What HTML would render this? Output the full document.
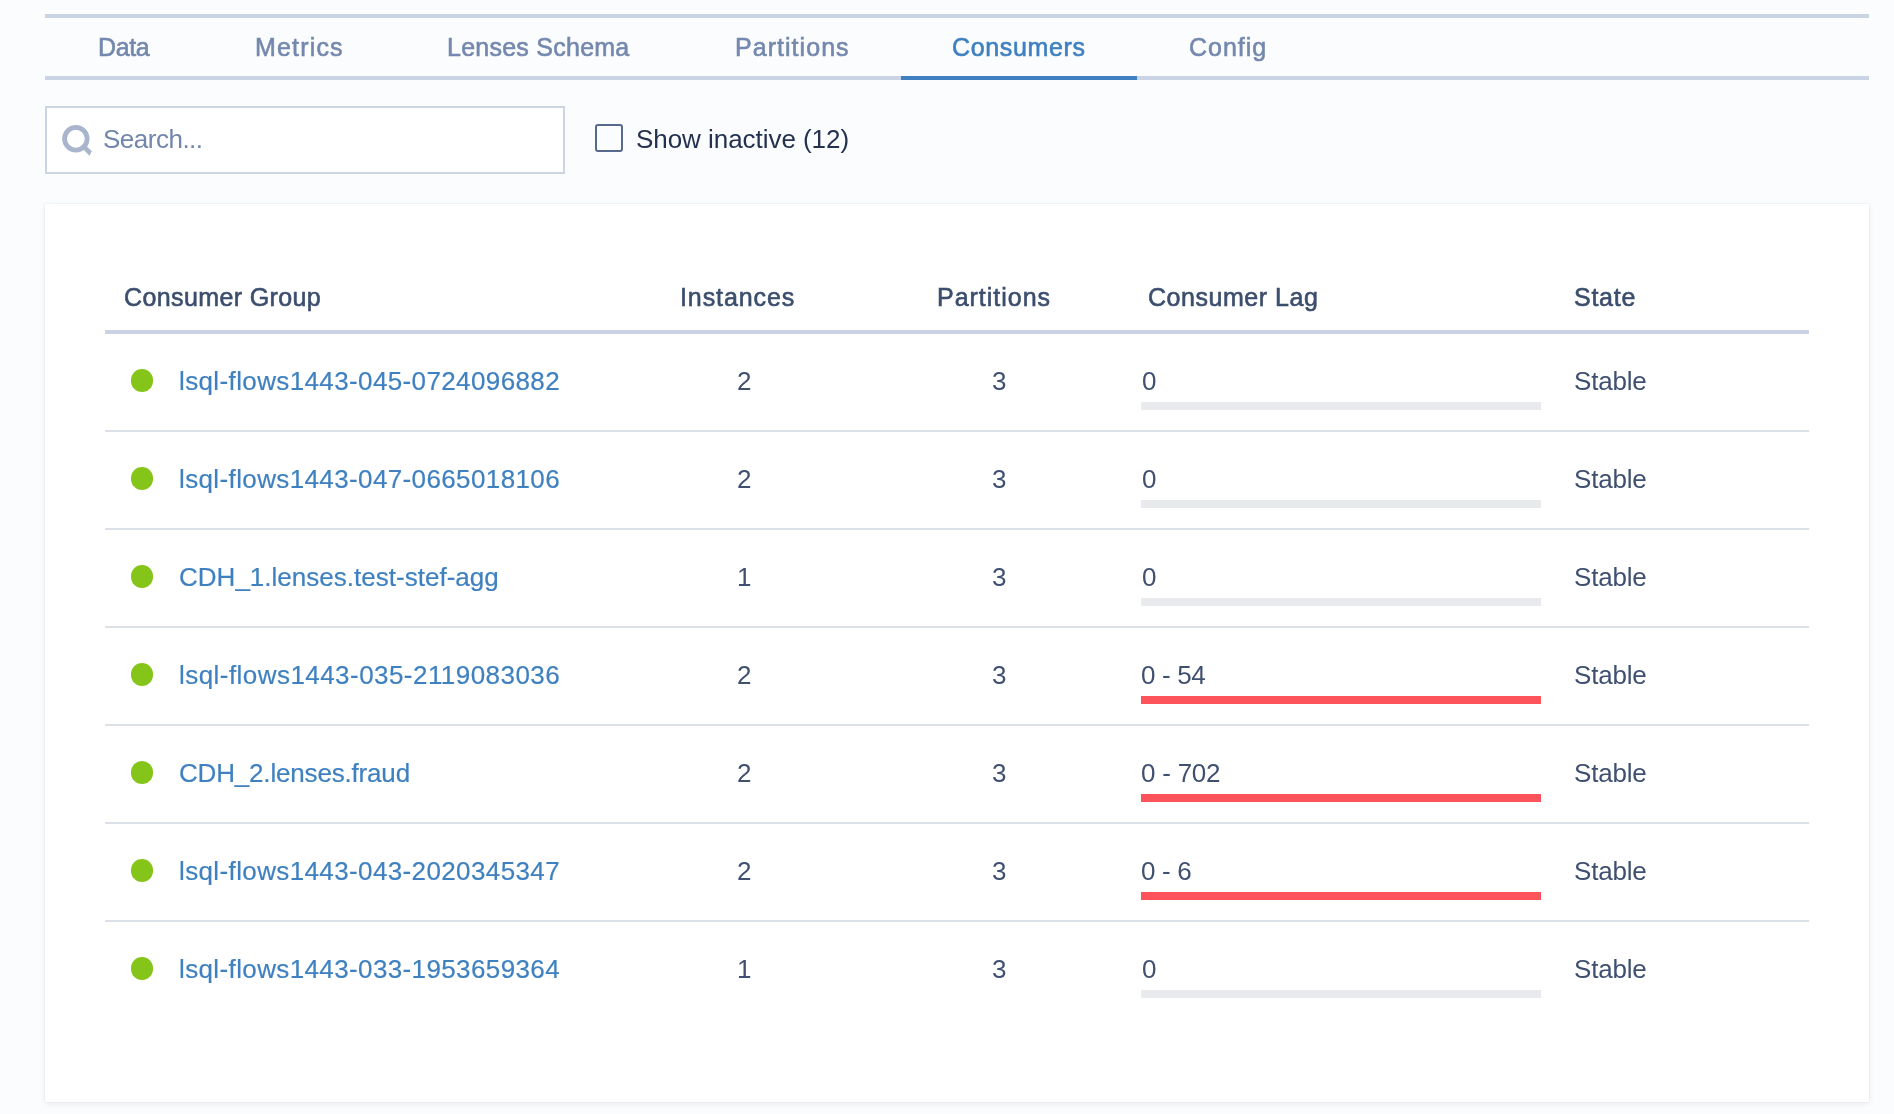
<!DOCTYPE html>
<html><head><meta charset="utf-8">
<style>
html,body{margin:0;padding:0;}
body{width:1894px;height:1114px;overflow:hidden;background:#fbfcfe;position:relative;font-family:"Liberation Sans",sans-serif;font-size:26px;line-height:30px;}
.a{position:absolute;white-space:nowrap;will-change:transform;}
.ln{position:absolute;}
.tab{color:#7488ae;-webkit-text-stroke:0.6px #7488ae;font-size:25px;}
.tab.on{color:#3e80c1;-webkit-text-stroke:0.6px #3e80c1;}
.ph{color:#7285ab;}
.cbl{color:#243250;}
.hd{color:#3c4e6d;-webkit-text-stroke:0.6px #3c4e6d;font-size:25px;}
.tx{color:#3f5070;}
.lk{color:#3f80c0;-webkit-text-stroke:0.2px #3f80c0;}
.dot{position:absolute;width:22.2px;height:22.4px;border-radius:50%;background:#85c51a;}
.bar{position:absolute;left:1141px;width:400px;height:8px;background:#e9eaed;}
.bar.r{background:#fd535b;}
.sep{position:absolute;left:105px;width:1704px;height:2px;background:#dce1e7;}

</style></head>
<body>
<div class="ln" style="left:45px;top:14px;width:1824px;height:4px;background:#cbd4e4"></div>
<div class="ln" style="left:45px;top:76px;width:1824px;height:4px;background:#cbd4e4"></div>
<div class="ln" style="left:901px;top:76px;width:236px;height:4px;background:#3e80c1"></div>
<div class="ln" style="left:45px;top:106px;width:516px;height:64px;border:2px solid #ccd4e4;background:#fff"></div>
<svg class="ln" style="left:58px;top:120px" width="40" height="40" viewBox="0 0 40 40">
<circle cx="17.85" cy="18.75" r="11.3" fill="none" stroke="#a9b5cc" stroke-width="4.8"/>
<path d="M26.6 24.2 L33.8 31.3 L31.5 35.8 L23.4 27.6 Z" fill="#a9b5cc"/>
</svg>
<div class="ln" style="left:595px;top:124px;width:24px;height:24px;border:2px solid #57698d;border-radius:3px"></div>
<div class="ln" style="left:45px;top:204px;width:1824px;height:898px;background:#fff;box-shadow:0 0 1px rgba(40,50,80,0.18),0 2px 6px rgba(40,50,80,0.08)"></div>
<div class="ln" style="left:105px;top:330px;width:1704px;height:4px;background:#cad3e3"></div>

<div class="dot" style="left:130.6px;top:369.4px"></div>
<div class="bar" style="top:402px"></div>
<div class="sep" style="top:430px"></div>
<div class="dot" style="left:130.6px;top:467.4px"></div>
<div class="bar" style="top:500px"></div>
<div class="sep" style="top:528px"></div>
<div class="dot" style="left:130.6px;top:565.4px"></div>
<div class="bar" style="top:598px"></div>
<div class="sep" style="top:626px"></div>
<div class="dot" style="left:130.6px;top:663.4px"></div>
<div class="bar r" style="top:696px"></div>
<div class="sep" style="top:724px"></div>
<div class="dot" style="left:130.6px;top:761.4px"></div>
<div class="bar r" style="top:794px"></div>
<div class="sep" style="top:822px"></div>
<div class="dot" style="left:130.6px;top:859.4px"></div>
<div class="bar r" style="top:892px"></div>
<div class="sep" style="top:920px"></div>
<div class="dot" style="left:130.6px;top:957.4px"></div>
<div class="bar" style="top:990px"></div>
<div id="tab_data" class="a tab" style="left:97.60px;top:32px;letter-spacing:-0.401px">Data</div>
<div id="tab_metrics" class="a tab" style="left:254.50px;top:32px;letter-spacing:1.166px">Metrics</div>
<div id="tab_lenses" class="a tab" style="left:447.00px;top:32px;letter-spacing:0.250px">Lenses Schema</div>
<div id="tab_parts" class="a tab" style="left:734.60px;top:32px;letter-spacing:1.042px">Partitions</div>
<div id="tab_cons" class="a tab on" style="left:952.40px;top:32px;letter-spacing:0.650px">Consumers</div>
<div id="tab_config" class="a tab" style="left:1189.00px;top:32px;letter-spacing:1.000px">Config</div>
<div id="search" class="a ph" style="left:103.00px;top:124px;letter-spacing:-0.500px">Search...</div>
<div id="show" class="a cbl" style="left:636.20px;top:124px;letter-spacing:-0.048px">Show inactive (12)</div>
<div id="h_cg" class="a hd" style="left:123.75px;top:282px;letter-spacing:0.384px">Consumer Group</div>
<div id="h_inst" class="a hd" style="left:680.40px;top:282px;letter-spacing:0.900px">Instances</div>
<div id="h_parts" class="a hd" style="left:937.00px;top:282px;letter-spacing:0.980px">Partitions</div>
<div id="h_lag" class="a hd" style="left:1148.10px;top:282px;letter-spacing:0.529px">Consumer Lag</div>
<div id="h_state" class="a hd" style="left:1574.00px;top:282px;letter-spacing:0.750px">State</div>
<div id="link0" class="a lk" style="left:179.00px;top:366px;letter-spacing:0.377px">lsql-flows1443-045-0724096882</div>
<div id="inst0" class="a tx" style="left:737.00px;top:366px">2</div>
<div id="parts0" class="a tx" style="left:992.30px;top:366px">3</div>
<div id="lag0" class="a tx" style="left:1141.50px;top:366px">0</div>
<div id="state0" class="a tx" style="left:1574.00px;top:366px;letter-spacing:-0.200px">Stable</div>
<div id="link1" class="a lk" style="left:179.00px;top:464px;letter-spacing:0.377px">lsql-flows1443-047-0665018106</div>
<div id="inst1" class="a tx" style="left:737.00px;top:464px">2</div>
<div id="parts1" class="a tx" style="left:992.30px;top:464px">3</div>
<div id="lag1" class="a tx" style="left:1141.50px;top:464px">0</div>
<div id="state1" class="a tx" style="left:1574.00px;top:464px;letter-spacing:-0.200px">Stable</div>
<div id="link2" class="a lk" style="left:179.00px;top:562px;letter-spacing:0.016px">CDH_1.lenses.test-stef-agg</div>
<div id="inst2" class="a tx" style="left:737.00px;top:562px">1</div>
<div id="parts2" class="a tx" style="left:992.30px;top:562px">3</div>
<div id="lag2" class="a tx" style="left:1141.50px;top:562px">0</div>
<div id="state2" class="a tx" style="left:1574.00px;top:562px;letter-spacing:-0.200px">Stable</div>
<div id="link3" class="a lk" style="left:179.00px;top:660px;letter-spacing:0.449px">lsql-flows1443-035-2119083036</div>
<div id="inst3" class="a tx" style="left:737.00px;top:660px">2</div>
<div id="parts3" class="a tx" style="left:992.30px;top:660px">3</div>
<div id="lag3" class="a tx" style="left:1140.70px;top:660px;letter-spacing:-0.360px">0 - 54</div>
<div id="state3" class="a tx" style="left:1574.00px;top:660px;letter-spacing:-0.200px">Stable</div>
<div id="link4" class="a lk" style="left:179.00px;top:758px;letter-spacing:-0.177px">CDH_2.lenses.fraud</div>
<div id="inst4" class="a tx" style="left:737.00px;top:758px">2</div>
<div id="parts4" class="a tx" style="left:992.30px;top:758px">3</div>
<div id="lag4" class="a tx" style="left:1140.70px;top:758px;letter-spacing:-0.232px">0 - 702</div>
<div id="state4" class="a tx" style="left:1574.00px;top:758px;letter-spacing:-0.200px">Stable</div>
<div id="link5" class="a lk" style="left:179.00px;top:856px;letter-spacing:0.377px">lsql-flows1443-043-2020345347</div>
<div id="inst5" class="a tx" style="left:737.00px;top:856px">2</div>
<div id="parts5" class="a tx" style="left:992.30px;top:856px">3</div>
<div id="lag5" class="a tx" style="left:1140.70px;top:856px;letter-spacing:-0.350px">0 - 6</div>
<div id="state5" class="a tx" style="left:1574.00px;top:856px;letter-spacing:-0.200px">Stable</div>
<div id="link6" class="a lk" style="left:179.00px;top:954px;letter-spacing:0.377px">lsql-flows1443-033-1953659364</div>
<div id="inst6" class="a tx" style="left:737.00px;top:954px">1</div>
<div id="parts6" class="a tx" style="left:992.30px;top:954px">3</div>
<div id="lag6" class="a tx" style="left:1141.50px;top:954px">0</div>
<div id="state6" class="a tx" style="left:1574.00px;top:954px;letter-spacing:-0.200px">Stable</div>
</body></html>
